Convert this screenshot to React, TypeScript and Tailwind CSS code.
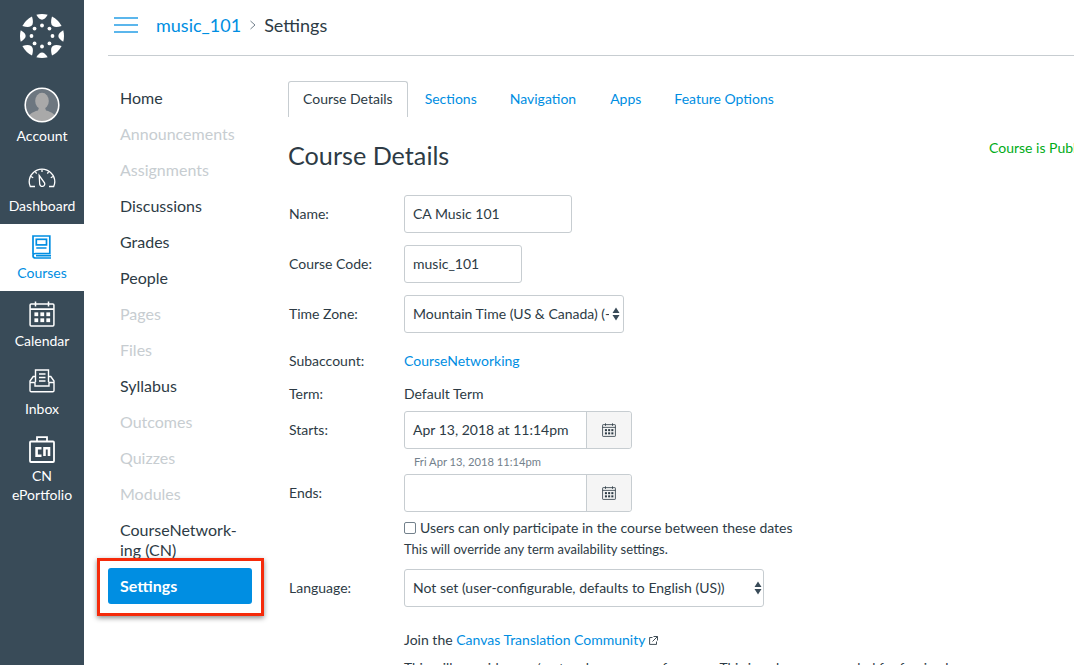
import React from "react";

const LOGO_ANGLES = [0, 45, 90, 135, 180, 225, 270, 315];

function CanvasLogo() {
  const R = 22.5;
  const pt = (rad: number, deg: number) => {
    const a = ((deg - 90) * Math.PI) / 180;
    return `${(22 + rad * Math.cos(a)).toFixed(2)} ${(22 + rad * Math.sin(a)).toFixed(2)}`;
  };
  return (
    <svg width="44" height="44" viewBox="0 0 44 44" fill="#fff">
      {LOGO_ANGLES.map((a) => {
        const half = a % 90 === 0 ? 15 : 18;
        const ctrl = a % 90 === 0 ? 11.5 : 8.5;
        return (
          <path
            key={a}
            d={`M${pt(R - 0.5, a - half)} A${R} ${R} 0 0 1 ${pt(R - 0.5, a + half)} Q${pt(ctrl, a)} ${pt(R - 0.5, a - half)}Z`}
          />
        );
      })}
      {LOGO_ANGLES.map((a) => {
        const t = ((a - 90) * Math.PI) / 180;
        return <circle key={a} cx={22 + 10.5 * Math.cos(t)} cy={22 + 10.5 * Math.sin(t)} r="1.9" />;
      })}
    </svg>
  );
}

function Avatar() {
  return (
    <svg width="36" height="36" viewBox="0 0 36 36">
      <defs>
        <clipPath id="av">
          <circle cx="18" cy="18" r="16.5" />
        </clipPath>
      </defs>
      <circle cx="18" cy="18" r="16.5" fill="#6d7780" />
      <g clipPath="url(#av)" fill="#a9a9a9">
        <ellipse cx="18" cy="14" rx="6.8" ry="8.2" />
        <path d="M3 36c0-8 5-11 11-12.5l1-3h6l1 3C28 25 33 28 33 36z" />
      </g>
      <circle cx="18" cy="18" r="16.8" fill="none" stroke="#fff" strokeWidth="1.6" />
    </svg>
  );
}

function DashIcon() {
  return (
    <svg width="28" height="20" viewBox="0 0 28 20" fill="none" stroke="#fff" strokeWidth="1.3">
      <path d="M7 18.500H2.300C1.600 16.800 1.200 15.300 1.200 13.800 1.200 7 6.900 1.200 14 1.200s12.800 5.800 12.800 12.600c0 1.500-.4 3-1.100 4.700H21" />
      <path d="M11.200 7.500l5.300 7.300a2.500 2.500 0 0 1-1.800 3.600 2.600 2.600 0 0 1-3-2.200z" />
      <path d="M14 1.500v2.500M7.300 3.500l1.300 2.100M20.700 3.500l-1.300 2.100M3 8.500l2.200 1.200M25 8.500l-2.200 1.200" />
    </svg>
  );
}

function BookIcon() {
  return (
    <svg width="20" height="24" viewBox="0 0 20 24" fill="none" stroke="#008ee2" strokeWidth="1.700">
      <path d="M1 19.500V1h16.800v17.500H3.500C2 18.500 1 19.300 1 20.700S2 23 3.500 23H19" />
      <rect x="4.300" y="4.300" width="10.200" height="5.600" />
      <path d="M4.300 13h10.200M4 20.700h15" />
    </svg>
  );
}

function CalendarIcon({ size = 24, color = "#fff" }: { size?: number; color?: string }) {
  return (
    <svg width={size} height={size} viewBox="0 0 24 24" fill="none" stroke={color} strokeWidth="1.400">
      <rect x="1" y="2.800" width="22" height="20.200" rx="1" />
      <path d="M1 7.500h22M6 .5v4.500M18 .5v4.500" />
      <g fill={color} stroke="none">
        {[5, 10.5, 16].map((x) =>
          [10.5, 16].map((y) => <rect key={`${x}-${y}`} x={x} y={y} width="3.500" height="3.500" />)
        )}
      </g>
    </svg>
  );
}

function InboxIcon() {
  return (
    <svg width="26" height="24" viewBox="0 0 26 24" fill="none" stroke="#fff" strokeWidth="1.400">
      <path d="M6.500 13V1h13v12" />
      <path d="M10 5h6.500M10 8.500h6.500M10 12h6.500" />
      <path d="M6.500 7.500H4.200L1 12v9.500c0 .8.500 1.300 1.300 1.300h21.400c.8 0 1.300-.5 1.300-1.300V12l-3.200-4.500h-2.300" />
      <path d="M1 13.500h5v3.500h14v-3.500h5" />
    </svg>
  );
}

function CnIcon() {
  return (
    <svg width="26" height="27" viewBox="0 0 26 27" fill="none">
      <rect x="1" y="5.500" width="24" height="20.500" rx="1" stroke="#fff" strokeWidth="1.800" />
      <path d="M8 5V1.200h10V5" stroke="#fff" strokeWidth="1.800" />
      <path d="M12.500 12.300H7.600v7.400h4.900" stroke="#fff" strokeWidth="2.600" />
      <path d="M15.500 20v-7.700h4.500V20" stroke="#fff" strokeWidth="2.600" />
    </svg>
  );
}

function SelectArrows({ color = "#394b58" }: { color?: string }) {
  return (
    <svg width="8" height="14" viewBox="0 0 8 14" fill={color}>
      <path d="M4 0.500L7.500 6H.5zM4 13.500L.5 8h7z" />
    </svg>
  );
}

function ExternalIcon() {
  return (
    <svg width="9" height="9" viewBox="0 0 9 9" fill="none" stroke="#2d3b45" strokeWidth="0.900">
      <path d="M3.500 1.500H.6v6.900h6.900V5.500M4.500.5h4v4M8.300.7L3.500 5.500" />
    </svg>
  );
}

const COURSE_NAV: [string, boolean][] = [
  ["Home", true],
  ["Announcements", false],
  ["Assignments", false],
  ["Discussions", true],
  ["Grades", true],
  ["People", true],
  ["Pages", false],
  ["Files", false],
  ["Syllabus", true],
  ["Outcomes", false],
  ["Quizzes", false],
  ["Modules", false],
];

function Label({ children }: { children: React.ReactNode }) {
  return <div className="w-[116px] shrink-0 pl-px">{children}</div>;
}

function TextBox({ w, value }: { w: string; value: string }) {
  return (
    <div className={`${w} flex h-[38px] items-center rounded-[3px] border border-[#c7cdd1] bg-white px-2`}>{value}</div>
  );
}

function SelectBox({ w, children }: { w: string; children: React.ReactNode }) {
  return (
    <div className={`${w} flex h-[38px] items-center justify-between overflow-hidden rounded-[3px] border border-[#c7cdd1] bg-white pl-2 pr-px whitespace-nowrap`}>
      {children}
    </div>
  );
}

function DateBox({ value }: { value?: string }) {
  return (
    <div className="flex h-[38px] w-[228px] rounded-[3px] border border-[#c7cdd1] bg-white">
      <div className="flex flex-1 items-center px-2">{value}</div>
      <div className="flex w-[45px] items-center justify-center rounded-r-[3px] border-l border-[#c7cdd1] bg-[#f5f5f5]">
        <CalendarIcon size={14} color="#2d3b45" />
      </div>
    </div>
  );
}

export default function App() {
  return (
    <div className="relative flex h-[665px] w-[1074px] overflow-hidden bg-white text-[14px] leading-5 text-[#2d3b45] [font-family:Lato,'Liberation_Sans',sans-serif]">
      <aside className="flex w-[84px] shrink-0 flex-col bg-[#394b58] text-center text-white">
        <div className="flex h-[72px] items-center justify-center">
          <CanvasLogo />
        </div>
        <div className="flex h-[82px] flex-col items-center pt-[15px]">
          <Avatar />
          <span className="mt-[3px]">Account</span>
        </div>
        <div className="flex h-[70px] flex-col items-center pt-[14px]">
          <DashIcon />
          <span className="mt-[8px]">Dashboard</span>
        </div>
        <div className="flex h-[67px] flex-col items-center bg-white pt-[11px] text-[#008ee2]">
          <BookIcon />
          <span className="mt-[4px]">Courses</span>
        </div>
        <div className="flex h-[68px] flex-col items-center pt-[10px]">
          <CalendarIcon size={26} />
          <span className="mt-[4px]">Calendar</span>
        </div>
        <div className="flex h-[68px] flex-col items-center pt-[10px]">
          <InboxIcon />
          <span className="mt-[6px]">Inbox</span>
        </div>
        <div className="flex flex-col items-center pt-[9px]">
          <CnIcon />
          <span className="mt-[3px]">CN</span>
          <span className="mt-[-1px]">ePortfolio</span>
        </div>
      </aside>

      <div className="flex min-w-0 flex-1 flex-col pl-6">
        <header className="flex h-[56px] shrink-0 items-center border-b border-[#c7cdd1] pb-[6px]">
          <svg width="24" height="16" viewBox="0 0 24 16" className="ml-[6px]" stroke="#008ee2" strokeWidth="1.500" opacity="0.85">
            <path d="M0 1h24M0 8h24M0 15h24" />
          </svg>
          <span className="ml-[18px] text-[18px] text-[#008ee2]">music_101</span>
          <svg width="6" height="10" viewBox="0 0 6 10" fill="none" stroke="#73818c" className="ml-[9px] mr-[8px]">
            <path d="M.5 1l4.500 4-4.500 4" />
          </svg>
          <span className="text-[18px]">Settings</span>
        </header>

        <div className="flex min-h-0 flex-1">
          <nav className="w-[144px] shrink-0 pt-[24px] text-[16px]">
            {COURSE_NAV.map(([label, on]) => (
              <div key={label} className={`h-9 px-3 py-2 ${on ? "text-[#2d3b45]" : "text-[#c7cdd1]"}`}>
                {label}
              </div>
            ))}
            <div className="px-3 py-2">
              CourseNetwork-
              <br />
              ing (CN)
            </div>
            <div className="h-9 rounded-[3px] bg-[#008ee2] px-3 py-2 font-bold text-white">Settings</div>
          </nav>

          <main className="min-w-0 flex-1 pl-9 pt-[25px]">
            <div className="flex h-9 items-stretch text-[#008ee2]">
              <div className="rounded-t-[3px] border border-b-0 border-[#c7cdd1] px-[14px] py-[7px] text-[#2d3b45]">Course Details</div>
              <div className="ml-[3px] px-[14px] py-[8px]">Sections</div>
              <div className="ml-[1px] px-[18px] py-[8px]">Navigation</div>
              <div className="ml-[-1px] px-[17px] py-[8px]">Apps</div>
              <div className="ml-[1px] px-[15px] py-[8px]">Feature Options</div>
            </div>

            <div className="relative flex h-[78px] items-center">
              <h1 className="mb-[2px] text-[25.2px] leading-8 font-normal">Course Details</h1>
              <div className="absolute left-[701px] top-[21px] whitespace-nowrap text-[#00ac18]">Course is Published</div>
            </div>

            <div className="flex items-center">
              <Label>Name:</Label>
              <TextBox w="w-[168px]" value="CA Music 101" />
            </div>
            <div className="mt-3 flex items-center">
              <Label>Course Code:</Label>
              <TextBox w="w-[118px]" value="music_101" />
            </div>
            <div className="mt-3 flex items-center">
              <Label>Time Zone:</Label>
              <SelectBox w="w-[220px]">
                <span className="w-[196px] overflow-hidden">Mountain Time (US &amp; Canada) (-06:00)</span>
                <span className="mr-[2px]">
                  <SelectArrows />
                </span>
              </SelectBox>
            </div>
            <div className="mt-[18px] flex items-center">
              <Label>Subaccount:</Label>
              <span className="text-[#008ee2]">CourseNetworking</span>
            </div>
            <div className="mt-[13px] flex items-center">
              <Label>Term:</Label>
              <span>Default Term</span>
            </div>
            <div className="mt-[7px] flex items-center">
              <Label>Starts:</Label>
              <DateBox value="Apr 13, 2018 at 11:14pm" />
            </div>
            <div className="ml-[126px] mt-[6px] h-[19px] text-[11.2px] leading-[14px] text-[#73818c]">Fri Apr 13, 2018 11:14pm</div>
            <div className="flex items-center">
              <Label>Ends:</Label>
              <DateBox />
            </div>
            <div className="ml-[116px] mt-[6px] flex items-center">
              <span className="h-3 w-3 rounded-[2px] border border-[#73818c] bg-white" />
              <span className="ml-[4px]">Users can only participate in the course between these dates</span>
            </div>
            <div className="ml-[116px] mt-px text-[13px]">This will override any term availability settings.</div>
            <div className="mt-[10px] flex items-center">
              <Label>Language:</Label>
              <SelectBox w="w-[360px]">
                <span>Not set (user-configurable, defaults to English (US))</span>
                <SelectArrows />
              </SelectBox>
            </div>
            <div className="ml-[116px] mt-[23px] flex items-center whitespace-nowrap">
              <span>Join the&nbsp;</span>
              <span className="text-[#008ee2]">Canvas Translation Community</span>
              <span className="ml-[4px]">
                <ExternalIcon />
              </span>
            </div>
            <div className="ml-[116px] mt-[8px] whitespace-nowrap text-[13.7px]">
              This will override user/system language preferences. This is only recommended for foreign language courses
            </div>
          </main>
        </div>
      </div>

      <div className="pointer-events-none absolute left-[97px] top-[558px] h-[58px] w-[167px] border-[3px] border-[#f52a0a] shadow-[0_2px_5px_rgba(0,0,0,0.45)]" />
    </div>
  );
}
